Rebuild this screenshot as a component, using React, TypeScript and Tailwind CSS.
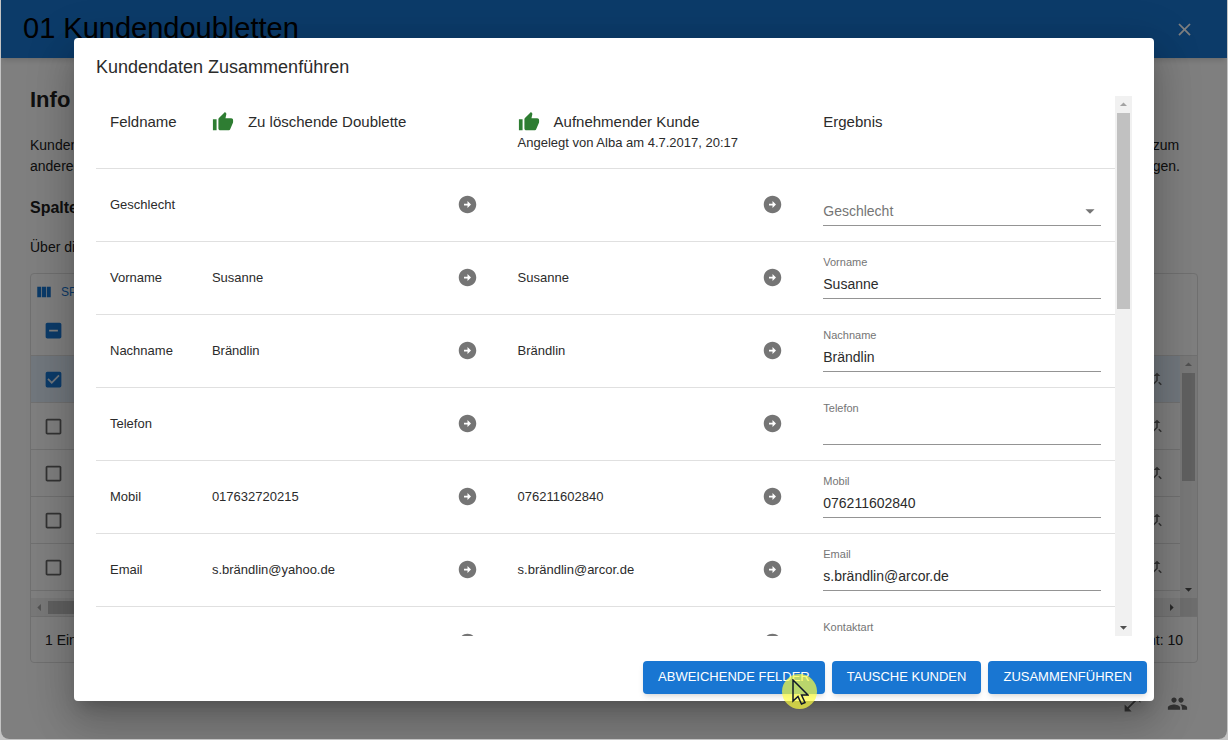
import React from 'react';
import {
  MdArrowCircleRight,
  MdArrowDropDown,
  MdArrowDropUp,
  MdArrowLeft,
  MdArrowRight,
  MdCallMerge,
  MdCheckBox,
  MdCheckBoxOutlineBlank,
  MdClose,
  MdIndeterminateCheckBox,
  MdOpenInFull,
  MdPeople,
  MdThumbUp,
  MdViewColumn,
} from 'react-icons/md';

interface Field {
  id: string;
  label: string;
  left: string;
  right: string;
  result: string;
  type?: 'select';
}

const fields: Field[] = [
  { id: 'geschlecht', label: 'Geschlecht', left: '', right: '', result: '', type: 'select' },
  { id: 'vorname', label: 'Vorname', left: 'Susanne', right: 'Susanne', result: 'Susanne' },
  { id: 'nachname', label: 'Nachname', left: 'Brändlin', right: 'Brändlin', result: 'Brändlin' },
  { id: 'telefon', label: 'Telefon', left: '', right: '', result: '' },
  { id: 'mobil', label: 'Mobil', left: '017632720215', right: '076211602840', result: '076211602840' },
  { id: 'email', label: 'Email', left: 's.brändlin@yahoo.de', right: 's.brändlin@arcor.de', result: 's.brändlin@arcor.de' },
  { id: 'kontaktart', label: 'Kontaktart', left: '', right: '', result: '' },
];

const gridRows = [true, false, false, false, false];

function RowCheckbox({ checked, label }: { checked: boolean; label: string }) {
  return (
    <label className="relative flex">
      <input type="checkbox" defaultChecked={checked} aria-label={label} className="absolute inset-0 opacity-0" />
      {checked ? (
        <MdCheckBox size={21} className="text-[#1976d2]" />
      ) : (
        <MdCheckBoxOutlineBlank size={21} className="text-[#666666]" />
      )}
    </label>
  );
}

function CustomerGrid() {
  return (
    <div className="mt-4 flex flex-col rounded border border-[#e0e0e0]">
      <div className="flex h-9 items-center px-1">
        <button className="flex items-center gap-2 text-xs text-[#1976d2]">
          <MdViewColumn size={18} />
          SPALTEN
        </button>
      </div>
      <div className="flex h-[46px] items-start border-b border-[#e0e0e0] px-3 pt-[10px]">
        <label className="relative flex">
          <input type="checkbox" aria-label="Alle Zeilen auswählen" className="absolute inset-0 opacity-0" />
          <MdIndeterminateCheckBox size={21} className="text-[#1976d2]" />
        </label>
      </div>
      <div className="flex h-[242px]">
        <div className="flex-1 overflow-hidden">
          {gridRows.map((checked, i) => (
            <div
              key={i}
              className={`flex h-[47px] items-center justify-between border-b border-[#e0e0e0] pr-[14px] pl-3 ${
                checked ? 'bg-[#e3eefa]' : ''
              }`}
            >
              <RowCheckbox checked={checked} label={`Zeile ${i + 1} auswählen`} />
              <button aria-label="Zusammenführen">
                <MdCallMerge size={18} className="text-[#666666]" />
              </button>
            </div>
          ))}
        </div>
        <div className="flex w-[17px] flex-col items-center bg-[#f1f1f1]">
          <MdArrowDropUp size={17} className="text-[#a3a3a3]" />
          <div className="h-[108px] w-[13px] bg-[#c1c1c1]" />
          <MdArrowDropDown size={17} className="mt-auto text-[#505050]" />
        </div>
      </div>
      <div className="flex h-[18px] items-center bg-[#f1f1f1]">
        <MdArrowLeft size={17} className="text-[#a3a3a3]" />
        <div className="h-[13px] w-[760px] bg-[#c1c1c1]" />
        <MdArrowRight size={17} className="ml-auto text-[#505050]" />
        <div className="h-[18px] w-[17px] bg-[#dcdcdc]" />
      </div>
      <div className="flex h-[46px] items-center justify-between border-t border-[#e0e0e0] px-[14px] text-sm">
        <span>1 Eintrag</span>
        <span>Gesamt: 10</span>
      </div>
    </div>
  );
}

function DoublettenPage() {
  return (
    <div className="flex h-full flex-col bg-white text-[#212121]">
      <header className="flex h-[58px] shrink-0 items-center justify-between bg-[#1976d2] pr-8 pl-[22px] shadow-md">
        <h1 className="text-[29px] text-black">01 Kundendoubletten</h1>
        <button aria-label="Schließen" className="text-white">
          <MdClose size={21} />
        </button>
      </header>
      <main className="flex-1 px-[29px] pt-7">
        <h2 className="text-[22px] leading-7 font-bold">Info</h2>
        <div className="mt-[21px] flex justify-between text-sm leading-[21px]">
          <p>
            Kunden können
            <br />
            anderen Kunden
          </p>
          <p className="pr-[18px]">
            zum
            <br />
            gen.
          </p>
        </div>
        <h3 className="mt-[19px] text-base leading-6 font-bold">Spalten</h3>
        <p className="mt-[17px] text-sm leading-[21px]">Über die Spalten</p>
        <div className="-mt-px">
          <CustomerGrid />
        </div>
        <div className="mt-[30px] flex justify-end gap-6 pr-[10px] text-[#666666]">
          <button aria-label="Vergrößern">
            <MdOpenInFull size={21} />
          </button>
          <button aria-label="Kunden">
            <MdPeople size={21} />
          </button>
        </div>
      </main>
    </div>
  );
}

function ResultField({ field }: { field: Field }) {
  if (field.type === 'select') {
    return (
      <div className="flex h-[29px] items-center border-b border-[#949494] text-[#757575]">
        <select
          aria-label={field.label}
          className="w-full appearance-none bg-transparent text-sm outline-none"
          defaultValue=""
        >
          <option value="">{field.label}</option>
        </select>
        <MdArrowDropDown size={22} className="shrink-0" />
      </div>
    );
  }
  return (
    <div className="flex flex-col">
      <label htmlFor={field.id} className="text-[11px] leading-4 text-[#757575]">
        {field.label}
      </label>
      <input
        id={field.id}
        type="text"
        defaultValue={field.result}
        className="h-[29px] w-full border-b border-[#949494] text-sm text-[#2b2b2b] outline-none"
      />
    </div>
  );
}

function MergeTable() {
  return (
    <table className="w-full table-fixed border-collapse text-left text-[#2b2b2b]">
      <colgroup>
        <col className="w-[10%]" />
        <col className="w-[30%]" />
        <col className="w-[30%]" />
        <col className="w-[30%]" />
      </colgroup>
      <thead>
        <tr className="h-[72px] border-b border-[#e0e0e0] align-top text-[15px] leading-[22px]">
          <th className="px-[14px] pt-[15px] font-normal">Feldname</th>
          <th className="px-[14px] pt-[15px] font-normal">
            <div className="flex items-center gap-[14px]">
              <MdThumbUp size={22} className="text-[#2e7d32]" />
              Zu löschende Doublette
            </div>
          </th>
          <th className="px-[14px] pt-[15px] font-normal">
            <div className="flex items-center gap-[14px]">
              <MdThumbUp size={22} className="text-[#2e7d32]" />
              Aufnehmender Kunde
            </div>
            <div className="text-[13px] leading-5">Angelegt von Alba am 4.7.2017, 20:17</div>
          </th>
          <th className="px-[14px] pt-[15px] font-normal">Ergebnis</th>
        </tr>
      </thead>
      <tbody>
        {fields.map((field) => (
          <tr key={field.id} className="h-[73px] border-b border-[#e0e0e0] text-[13px]">
            <td className="px-[14px]">{field.label}</td>
            {[field.left, field.right].map((value, i) => (
              <td key={i} className="px-[14px]">
                <div className="flex items-center justify-between pr-3">
                  <span>{value}</span>
                  <button aria-label={`${field.label} übernehmen`} className="text-[#757575]">
                    <MdArrowCircleRight size={21} />
                  </button>
                </div>
              </td>
            ))}
            <td className="px-[14px] pb-[15px] align-bottom">
              <ResultField field={field} />
            </td>
          </tr>
        ))}
      </tbody>
    </table>
  );
}

function ActionButton({ children }: { children: React.ReactNode }) {
  return (
    <button className="h-[33px] rounded bg-[#1976d2] px-[15px] pb-[2px] text-[13px] font-medium text-white uppercase shadow-md">
      {children}
    </button>
  );
}

function Cursor() {
  return (
    <div className="pointer-events-none absolute right-[337px] bottom-[-8px] flex h-[35px] w-[35px] items-center justify-center rounded-full bg-[#ffff40]/70">
      <svg width="18" height="26" viewBox="0 0 18 26" fill="none">
        <path d="M2 1v21l5-4.500 3.500 7.500 3.500-1.500-3.500-7.500h6.500z" stroke="#101828" strokeWidth="1.500" />
      </svg>
    </div>
  );
}

function MergeDialog() {
  return (
    <div
      role="dialog"
      aria-labelledby="merge-title"
      className="relative flex w-full max-w-[1080px] flex-col rounded bg-white shadow-[0_11px_15px_-7px_rgba(0,0,0,0.2),0_24px_38px_3px_rgba(0,0,0,0.14),0_9px_46px_8px_rgba(0,0,0,0.12)]"
    >
      <h2 id="merge-title" className="px-[22px] pt-[14px] pb-[14px] text-lg leading-[30px] text-[#2b2b2b]">
        Kundendaten Zusammenführen
      </h2>
      <div className="mx-[22px] flex min-h-0 flex-1">
        <div className="flex-1 overflow-hidden">
          <MergeTable />
        </div>
        <div className="flex w-[17px] flex-col items-center bg-[#f1f1f1]">
          <MdArrowDropUp size={17} className="text-[#a3a3a3]" />
          <div className="h-[196px] w-[13px] bg-[#c1c1c1]" />
          <MdArrowDropDown size={17} className="mt-auto text-[#505050]" />
        </div>
      </div>
      <div className="flex justify-end gap-[7px] px-[7px] pt-[25px] pb-[7px]">
        <ActionButton>Abweichende Felder</ActionButton>
        <ActionButton>Tausche Kunden</ActionButton>
        <ActionButton>Zusammenführen</ActionButton>
      </div>
      <Cursor />
    </div>
  );
}

export default function App() {
  return (
    <div className="h-screen overflow-hidden bg-[#c4c4c4] px-px pb-px font-['Liberation_Sans',Arial,sans-serif]">
      <div className="relative h-full overflow-hidden rounded-b-lg">
        <DoublettenPage />
        <div className="absolute inset-0 flex justify-center bg-black/50 px-8 py-[38px]">
          <MergeDialog />
        </div>
      </div>
    </div>
  );
}
